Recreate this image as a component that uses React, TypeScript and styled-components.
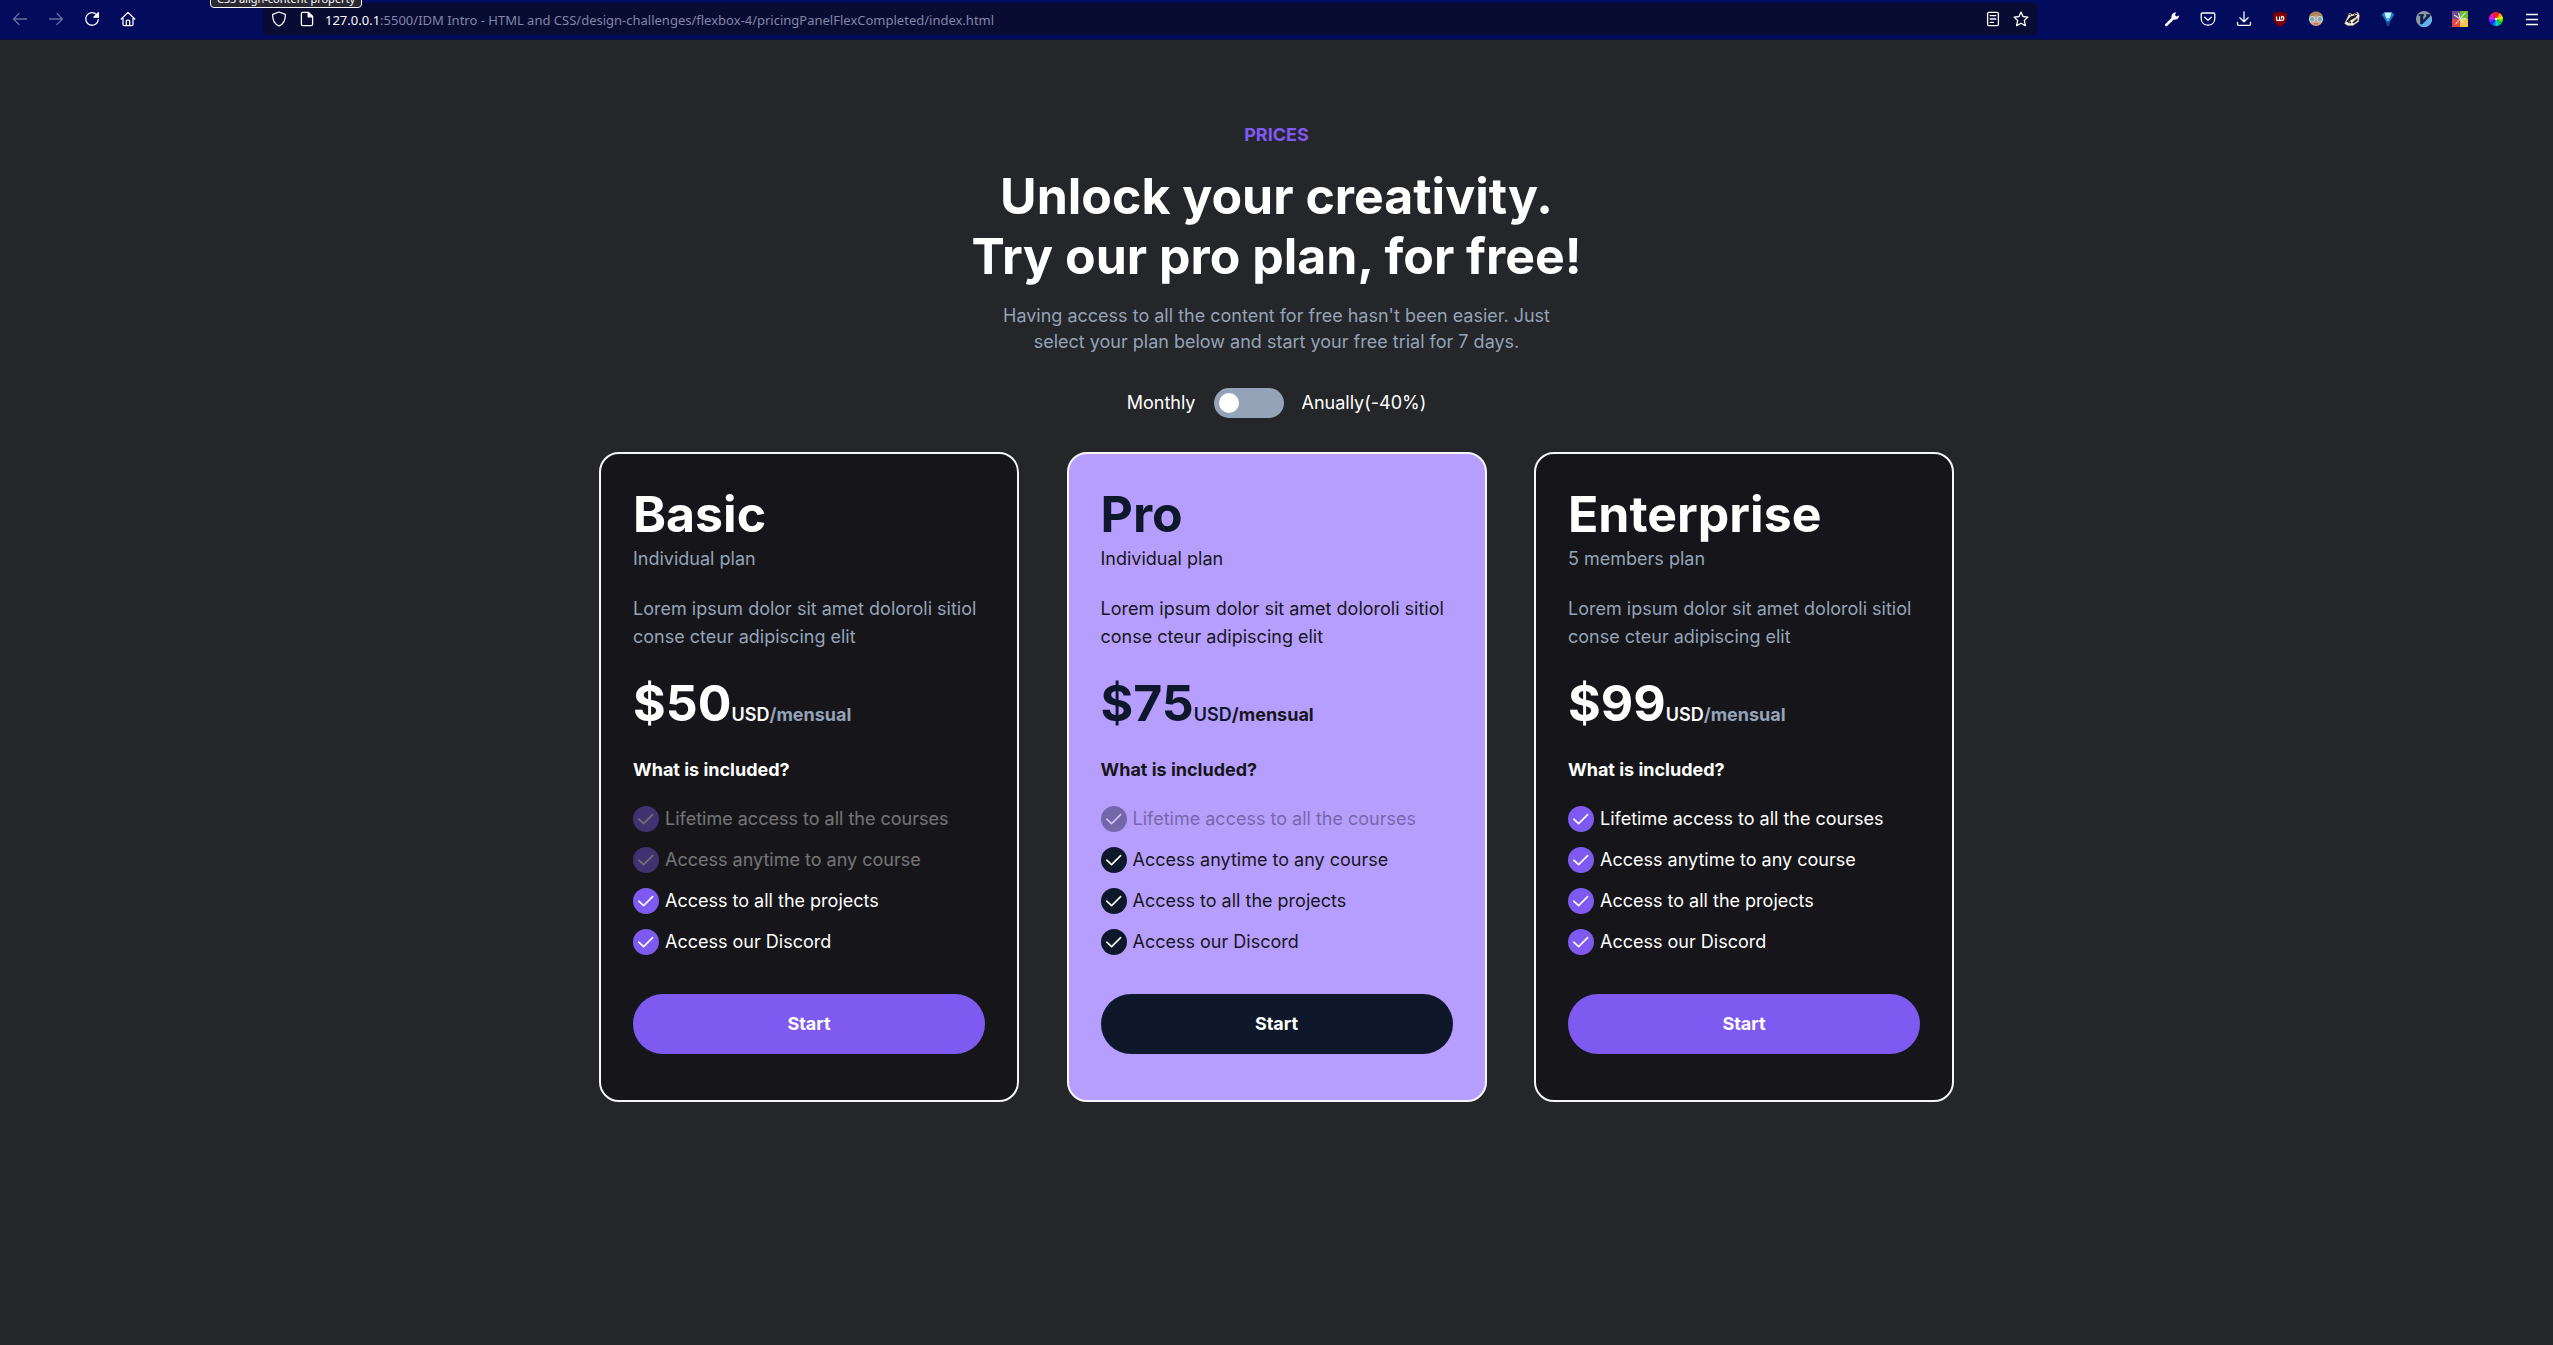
import React, { useState } from "react";
import styled, { createGlobalStyle, css } from "styled-components";

const GlobalStyle = createGlobalStyle`
  *, *::before, *::after { box-sizing: border-box; }
  body {
    margin: 0;
    background: #242629;
    color: #fffffe;
    font-family: Inter, "Liberation Sans", sans-serif;
    font-size: 18px;
    line-height: 28px;
  }
  h1, h2, h3, p, ul { margin: 0; padding: 0; }
  button, input { font: inherit; }
`;

/* ---------- browser toolbar ---------- */

const Toolbar = styled.header`
  position: relative;
  display: flex;
  align-items: center;
  height: 40px;
  padding: 0 3px 1px 2px;
  background: #030b5c;
  border-bottom: 1px solid #0b0d3d;
  overflow: hidden;
  font-family: "Noto Sans", "Open Sans", sans-serif;
`;

const ToolGroup = styled.div`
  display: flex;
  flex: none;
`;

const Spacer = styled.div`
  flex: 0 1 117px;
`;

const ToolButton = styled.button<{ $faded?: boolean; $narrow?: boolean }>`
  display: grid;
  place-items: center;
  width: ${(p) => (p.$narrow ? 28 : 36)}px;
  height: 32px;
  padding: 0;
  border: 0;
  background: none;
  color: #fbfbfe;
  opacity: ${(p) => (p.$faded ? 0.4 : 1)};
`;

const AddressBar = styled.div`
  display: flex;
  align-items: center;
  flex: 1 1 0;
  min-width: 0;
  height: 32px;
  padding: 0 2px;
  border-radius: 4px;
  background: #080c33;
`;

const Address = styled.div`
  flex: 1;
  min-width: 0;
  padding: 2px 0 0 4px;
  overflow: hidden;
  white-space: nowrap;
  color: #8385a6;
  font-size: 13px;
  line-height: 20px;
`;

const Host = styled.span`
  color: #fbfbfe;
`;

const TabTooltip = styled.div`
  position: absolute;
  left: 210px;
  bottom: 31px;
  padding: 2px 6px 0;
  border: 1px solid #fbfbfe;
  border-radius: 4px;
  background: #2b2a33;
  font-size: 11px;
  line-height: 16px;
  white-space: nowrap;
`;

const LineIcon = ({ children }: { children: React.ReactNode }) => (
  <svg width="16" height="16" viewBox="0 0 16 16" fill="none" stroke="currentColor" strokeWidth="1.3" strokeLinecap="round" strokeLinejoin="round" aria-hidden="true">
    {children}
  </svg>
);

const ArtIcon = ({ children }: { children: React.ReactNode }) => (
  <svg width="16" height="16" viewBox="0 0 16 16" aria-hidden="true">
    {children}
  </svg>
);

const wheelColours = ["#ff1a1a", "#ff9a00", "#e6f000", "#6fe000", "#00d848", "#00d8c8", "#0090ff", "#2030ff", "#8a20ff", "#e018f0", "#ff1890", "#ff1850"];

const wheelSlice = (index: number) => {
  const point = (step: number) => {
    const angle = (step * Math.PI) / 6 - Math.PI / 2;
    return `${8 + 7 * Math.cos(angle)} ${8 + 7 * Math.sin(angle)}`;
  };
  return `M8 8L${point(index)}A7 7 0 0 1 ${point(index + 1)}Z`;
};

const BrowserToolbar = () => (
  <Toolbar>
    <ToolGroup>
      <ToolButton $faded aria-label="Back">
        <LineIcon><path d="M14.5 8H1.7M7 2.5L1.5 8L7 13.5" /></LineIcon>
      </ToolButton>
      <ToolButton $faded aria-label="Forward">
        <LineIcon><path d="M1.5 8h12.8M9 2.5L14.5 8L9 13.5" /></LineIcon>
      </ToolButton>
      <ToolButton aria-label="Reload">
        <LineIcon>
          <path d="M12.6 3.6A6.3 6.3 0 1 0 14.3 8.6" />
          <path d="M14.4 1.6v4.6H9.8z" fill="currentColor" />
        </LineIcon>
      </ToolButton>
      <ToolButton aria-label="Home">
        <LineIcon>
          <path d="M1.2 8L8 1.4L14.8 8M3 6.6v6.6c0 .8.5 1.4 1.3 1.4h7.4c.8 0 1.3-.6 1.3-1.4V6.6" />
          <path d="M6.3 14.4V10c0-.6.4-.9.9-.9h1.6c.5 0 .9.3.9.9v4.4" />
        </LineIcon>
      </ToolButton>
    </ToolGroup>
    <Spacer />
    <AddressBar>
      <ToolButton $narrow aria-label="Tracking protection">
        <LineIcon><path d="M8 1L14.3 3.4C14.7 9 12.6 13 8 15C3.4 13 1.3 9 1.7 3.4Z" /></LineIcon>
      </ToolButton>
      <ToolButton $narrow aria-label="Site information">
        <LineIcon>
          <path d="M3.6 1.4H9.6L13.6 5.4V13.2C13.6 14 13 14.6 12.2 14.6H3.8C3 14.6 2.4 14 2.4 13.2V2.6C2.4 1.9 2.9 1.4 3.6 1.4Z" />
          <path d="M9.2 1.6V5.8H13.4Z" fill="currentColor" />
        </LineIcon>
      </ToolButton>
      <Address role="textbox" aria-label="Address">
        <Host>127.0.0.1</Host>:5500/IDM Intro - HTML and CSS/design-challenges/flexbox-4/pricingPanelFlexCompleted/index.html
      </Address>
      <ToolButton $narrow aria-label="Reader view">
        <LineIcon>
          <rect x="2.6" y="1.4" width="10.8" height="13.2" rx="1.4" />
          <path d="M5.2 4.6h5.6M5.2 8h5.6M5.2 11.4h3.2" />
        </LineIcon>
      </ToolButton>
      <ToolButton $narrow aria-label="Bookmark this page">
        <LineIcon><path d="M8 1.1L10 5.5L14.9 6.1L11.3 9.4L12.4 14.6L8 12.2L3.6 14.6L4.7 9.4L1.1 6.1L6 5.5Z" /></LineIcon>
      </ToolButton>
    </AddressBar>
    <Spacer />
    <ToolGroup>
      <ToolButton aria-label="Developer tools">
        <ArtIcon>
          <path d="M1 13.4L7.6 6.8C7 4.2 8.5 1.6 12 1.2L11 4.2L12.6 5.6L15.2 4.4C15 7.4 12.4 9 9.8 8.6L2.8 15.2C1.6 15.4 .8 14.6 1 13.4Z" fill="currentColor" />
        </ArtIcon>
      </ToolButton>
      <ToolButton aria-label="Save to Pocket">
        <LineIcon>
          <path d="M2.4 2H13.6Q14.8 2 14.8 3.2V7.4C14.8 11.4 12 14.2 8 14.2C4 14.2 1.2 11.4 1.2 7.4V3.2Q1.2 2 2.4 2Z" />
          <path d="M4.7 6.2L8 9.2L11.3 6.2" />
        </LineIcon>
      </ToolButton>
      <ToolButton aria-label="Downloads">
        <LineIcon><path d="M8 .8V10.6M3.9 6.8L8 10.8L12.1 6.8M1.5 11.4V13C1.5 13.8 2 14.3 2.8 14.3H13.2C14 14.3 14.5 13.8 14.5 13V11.4" /></LineIcon>
      </ToolButton>
      <ToolButton aria-label="Ad blocker">
        <ArtIcon>
          <path d="M8 0C10 1.4 12.4 2 15 2C15 8.8 13.8 13 8 16C2.2 13 1 8.8 1 2C3.6 2 6 1.4 8 0Z" fill="#800000" />
          <path d="M4.6 5.4V8.4Q4.6 9.4 5.5 9.4H7.6V5.4M7.7 9.3H9.8Q11.8 9.3 11.8 7.4Q11.8 5.4 9.8 5.4H9.6V7.8" fill="none" stroke="#fff" strokeWidth="1.2" />
        </ArtIcon>
      </ToolButton>
      <ToolButton aria-label="Goggles extension">
        <ArtIcon>
          <circle cx="8" cy="8" r="7" fill="#d9a184" />
          <path d="M1.2 7C1 2.8 4.4 .6 8 .6C11.8 .6 15 2.8 14.8 7Q12 4.2 8 4.4Q4 4.2 1.2 7Z" fill="#a98558" />
          <circle cx="4.2" cy="8.2" r="2.8" fill="#7fa8b8" stroke="#c9dde2" strokeWidth="1" />
          <circle cx="11.8" cy="8.2" r="2.8" fill="#7fa8b8" stroke="#c9dde2" strokeWidth="1" />
          <path d="M6 12.8h4" stroke="#a4604c" />
        </ArtIcon>
      </ToolButton>
      <ToolButton aria-label="Privacy extension">
        <ArtIcon>
          <path d="M.6 12.6L3.4 6.8L5.4 2L8.4 3.6L14 1.2L15.4 4.6L14.6 10.6L9 14.6L3.6 14.6Z" fill="#f6efe6" stroke="#d98a4e" strokeWidth=".5" />
          <path d="M2.4 10.6L6.4 5.4L13.6 3.4L11.6 6.6L6 9.8L4.6 12Z" fill="#1c1c20" />
          <path d="M8.4 11.6L13.6 6.6L13.4 9.8L9.6 12.6Z" fill="#26262a" />
          <path d="M4.8 2.8L7 4.2M10.2 3.4L13.4 2.2" stroke="#26262a" />
          <circle cx="6.2" cy="11.6" r="1" fill="#26262a" />
        </ArtIcon>
      </ToolButton>
      <ToolButton aria-label="Gem extension">
        <ArtIcon>
          <path d="M1.6 3.6L4.2 1.4H11.8L14.4 3.6L10 10L8.8 15H7.2L6 10Z" fill="#1283cf" />
          <path d="M4.4 1.6H11.6L9.6 7.4H6.2Z" fill="#c9efff" />
          <path d="M6.2 7.4H9.6L8 11.6Z" fill="#45b8ee" />
          <path d="M6.4 10.4H9.6L8.6 15H7.4Z" fill="#0b4d8c" />
        </ArtIcon>
      </ToolButton>
      <ToolButton aria-label="Vim extension">
        <ArtIcon>
          <circle cx="8" cy="8" r="8" fill="#8f969c" />
          <path d="M15.6 5.4A8 8 0 0 1 3.6 14.7Z" fill="#63b2ee" />
          <path d="M2.6 3.2H8V4.8H7.2V9L11 4.8H10V3.2H14.4V4.8L6.6 13.2H4.2V4.8H2.6Z" fill="#0b1f57" />
        </ArtIcon>
      </ToolButton>
      <ToolButton aria-label="Colour tiles extension">
        <ArtIcon>
          <path d="M0 0H8V8H0Z" fill="#704a8e" />
          <path d="M8 0H16V8H8Z" fill="#6fbf2c" />
          <path d="M0 8H8V16H0Z" fill="#e8453c" />
          <path d="M8 8H16V16H8Z" fill="#f4c64f" />
          <path d="M2 4L7.4 7.4M6.6 2L7.8 7M13.4 1.6L8.6 7.2L3.4 13.4M9.6 8.2L14 7.4M9 9L11.8 12" stroke="#fff" strokeWidth="1" fill="none" />
        </ArtIcon>
      </ToolButton>
      <ToolButton aria-label="Colour picker extension">
        <ArtIcon>
          <circle cx="8" cy="8" r="7.4" fill="#10142c" />
          {wheelColours.map((colour, index) => (
            <path key={colour} d={wheelSlice(index)} fill={colour} />
          ))}
          <circle cx="8" cy="8" r="1.2" fill="#f4f4f4" />
        </ArtIcon>
      </ToolButton>
      <ToolButton aria-label="Menu">
        <LineIcon><path d="M2.5 3.5h11M2.5 8.5h11M2.5 13.5h11" /></LineIcon>
      </ToolButton>
    </ToolGroup>
    <TabTooltip role="tooltip">CSS align-content property</TabTooltip>
  </Toolbar>
);

/* ---------- pricing page ---------- */

const Page = styled.main`
  display: flex;
  flex-direction: column;
  align-items: center;
  padding: 84px 0 60px;
`;

const Eyebrow = styled.p`
  color: #7f5af0;
  font-weight: 700;
  line-height: 22px;
`;

const Headline = styled.h1`
  margin-top: 20px;
  font-size: 50px;
  font-weight: 700;
  line-height: 60px;
  text-align: center;
`;

const Lead = styled.p`
  max-width: 600px;
  margin-top: 17px;
  color: #94a3b8;
  line-height: 26px;
  text-align: center;
`;

const Billing = styled.div`
  display: flex;
  align-items: center;
  gap: 18px;
  margin: 33px 0 34px;
  line-height: 22px;
`;

const Switch = styled.input`
  appearance: none;
  display: flex;
  align-items: center;
  width: 70px;
  height: 30px;
  margin: 0;
  padding: 0 5px;
  border-radius: 15px;
  background: #94a3b8;
  cursor: pointer;

  &::before {
    content: "";
    width: 20px;
    height: 20px;
    border-radius: 50%;
    background: #fffffe;
  }

  &:checked {
    justify-content: flex-end;
    background: #7f5af0;
  }
`;

const Plans = styled.section`
  display: flex;
  flex-wrap: wrap;
  justify-content: space-evenly;
  gap: 32px 0;
  width: 100%;
  max-width: 1450px;
`;

const featuredColours = css`
  --text: #16161a;
  --strong: #0f172a;
  --muted: #16161a;
  --accent: #0f172a;
  background: #b69eff;
`;

const regularColours = css`
  --text: #fffffe;
  --strong: #fffffe;
  --muted: #94a3b8;
  --accent: #7f5af0;
  background: #16161a;
`;

const Card = styled.article<{ $featured: boolean }>`
  ${(p) => (p.$featured ? featuredColours : regularColours)}
  display: flex;
  flex-direction: column;
  width: 420px;
  padding: 29px 32px 46px;
  border: 2px solid #f5f5fa;
  border-radius: 20px;
  color: var(--text);
`;

const PlanName = styled.h2`
  color: var(--strong);
  font-size: 50px;
  font-weight: 700;
  line-height: 62px;
`;

const Muted = styled.p`
  color: var(--muted);
`;

const Description = styled(Muted)`
  margin-top: 22px;
`;

const Price = styled.p`
  display: flex;
  align-items: baseline;
  margin-top: 22px;
  color: var(--strong);
  font-weight: 700;
`;

const Amount = styled.span`
  font-size: 50px;
  line-height: 60px;
`;

const Currency = styled.span`
  font-weight: 600;
`;

const Period = styled.span`
  color: var(--muted);
`;

const Included = styled.h3`
  margin-top: 23px;
  font-size: 18px;
  font-weight: 700;
`;

const Features = styled.ul`
  display: flex;
  flex-direction: column;
  gap: 15px;
  margin: 22px 0 39px;
  list-style: none;
`;

const Feature = styled.li<{ $dimmed: boolean }>`
  display: flex;
  align-items: center;
  gap: 6px;
  line-height: 26px;
  opacity: ${(p) => (p.$dimmed ? 0.4 : 1)};
`;

const CheckBadge = styled.svg`
  flex: none;
  width: 26px;
  height: 26px;
  fill: var(--accent);
`;

const StartButton = styled.button`
  height: 60px;
  border: 0;
  border-radius: 30px;
  background: var(--accent);
  color: #fffffe;
  font-weight: 700;
  cursor: pointer;
`;

const features = [
  "Lifetime access to all the courses",
  "Access anytime to any course",
  "Access to all the projects",
  "Access our Discord",
];

interface Plan {
  name: string;
  audience: string;
  price: number;
  unavailable: number;
  featured: boolean;
}

const plans: Plan[] = [
  { name: "Basic", audience: "Individual plan", price: 50, unavailable: 2, featured: false },
  { name: "Pro", audience: "Individual plan", price: 75, unavailable: 1, featured: true },
  { name: "Enterprise", audience: "5 members plan", price: 99, unavailable: 0, featured: false },
];

const PlanCard = ({ plan }: { plan: Plan }) => (
  <Card $featured={plan.featured}>
    <PlanName>{plan.name}</PlanName>
    <Muted>{plan.audience}</Muted>
    <Description>Lorem ipsum dolor sit amet doloroli sitiol conse cteur adipiscing elit</Description>
    <Price>
      <Amount>${plan.price}</Amount>
      <Currency>USD</Currency>
      <Period>/mensual</Period>
    </Price>
    <Included>What is included?</Included>
    <Features>
      {features.map((feature, index) => (
        <Feature key={feature} $dimmed={index < plan.unavailable}>
          <CheckBadge viewBox="0 0 26 26" aria-hidden="true">
            <circle cx="13" cy="13" r="13" />
            <path d="M5.8 13.2L10.6 17.6L19.6 8.6" fill="none" stroke="#fffffe" strokeWidth="1.6" strokeLinecap="round" strokeLinejoin="round" />
          </CheckBadge>
          {feature}
        </Feature>
      ))}
    </Features>
    <StartButton type="button">Start</StartButton>
  </Card>
);

export default function App() {
  const [yearly, setYearly] = useState(false);

  return (
    <>
      <GlobalStyle />
      <BrowserToolbar />
      <Page>
        <Eyebrow>PRICES</Eyebrow>
        <Headline>
          Unlock your creativity.
          <br />
          Try our pro plan, for free!
        </Headline>
        <Lead>
          Having access to all the content for free hasn't been easier. Just
          <br />
          select your plan below and start your free trial for 7 days.
        </Lead>
        <Billing>
          <label htmlFor="billing">Monthly</label>
          <Switch id="billing" type="checkbox" role="switch" checked={yearly} onChange={(event) => setYearly(event.target.checked)} />
          <label htmlFor="billing">Anually(-40%)</label>
        </Billing>
        <Plans>
          {plans.map((plan) => (
            <PlanCard key={plan.name} plan={plan} />
          ))}
        </Plans>
      </Page>
    </>
  );
}
